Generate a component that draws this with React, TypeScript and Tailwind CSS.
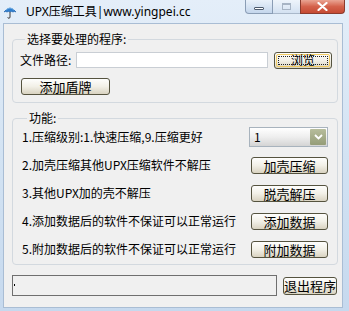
import React from "react";

const FONT = { fontFamily: '"Noto Sans CJK SC", "Noto Sans", sans-serif' };

function XpButton({
  children,
  className = "",
  focused = false,
}: {
  children: React.ReactNode;
  className?: string;
  focused?: boolean;
}) {
  return (
    <div
      className={
        "relative flex items-center justify-center rounded-[3px] border border-[#55533f] bg-gradient-to-b from-[#fefefd] via-[#f2f0e7] to-[#d9d3c1] text-[12px] leading-none text-black " +
        className
      }
    >
      {focused && (
        <div className="absolute inset-[1px] rounded-[2px] border border-[#f2cc62]">
          <div className="absolute inset-[1px] border border-dotted border-[#222]" />
        </div>
      )}
      <span className="relative">{children}</span>
    </div>
  );
}

function Umbrella() {
  return (
    <svg width="14" height="14" viewBox="0 0 14 14">
      <path d="M1 7 Q7 -1 13 7 Q11.5 5.8 10 7 Q8.5 5.8 7 7 Q5.5 5.8 4 7 Q2.5 5.8 1 7Z" fill="#2f7fd0" stroke="#1d5ea8" strokeWidth="0.6" />
      <path d="M3 5 Q7 1 11 5" fill="none" stroke="#8cc4f2" strokeWidth="0.8" />
      <path d="M7 7 V12 Q7 13.3 5.8 13.3 Q4.8 13.3 4.8 12.3" fill="none" stroke="#3a3a3a" strokeWidth="1" />
    </svg>
  );
}

function Row({ text, children }: { text: string; children: React.ReactNode }) {
  return (
    <div className="flex h-[20px] items-center justify-between">
      <span className="text-[12px] leading-none text-black whitespace-nowrap">{text}</span>
      {children}
    </div>
  );
}

export default function App() {
  return (
    <div
      className="flex h-[311px] w-[349px] flex-col overflow-hidden bg-gradient-to-b from-[#e4eef9] via-[#d3e3f3] to-[#c6d9ee]"
      style={FONT}
    >
      {/* Title bar */}
      <div className="flex h-[23px] items-start">
        <div className="flex h-[23px] items-center pl-[3px]">
          <Umbrella />
          <span
            className="ml-[9px] text-[12px] leading-none text-black"
            style={{ fontFamily: '"Noto Sans", "Noto Sans CJK SC", sans-serif' }}
          >
            UPX压缩工具|www.yingpei.cc
          </span>
        </div>
        <div className="ml-auto mr-[4px] flex h-[14px]">
          <div className="flex w-[28px] items-center justify-center rounded-bl-[4px] border border-t-0 border-[#8a9db5] bg-gradient-to-b from-[#e9f1fa] to-[#c4d6ec]">
            <div className="mt-[3px] h-[3px] w-[10px] rounded-[1px] border border-[#4d5b6e] bg-white" />
          </div>
          <div className="flex w-[27px] items-center justify-center border-b border-[#a9b8ca] bg-gradient-to-b from-[#eef4fb] to-[#d3e1f1]">
            <div className="h-[7px] w-[9px] border border-[#a7b4c4] border-t-2" />
          </div>
          <div className="flex w-[45px] items-center justify-center rounded-br-[4px] border border-t-0 border-[#8b3b2d] bg-gradient-to-b from-[#e9a493] via-[#d4624c] to-[#c54a33]">
            <svg width="11" height="9" viewBox="0 0 11 9">
              <path d="M1.5 1 L9.5 8 M9.5 1 L1.5 8" stroke="#fff" strokeWidth="2.2" strokeLinecap="round" />
            </svg>
          </div>
        </div>
      </div>

      {/* Client area */}
      <div className="ml-[3px] mr-[6px] mb-[3px] h-[285px] border border-[#a9bdd4] bg-[#f0f0f0] pl-[8px] pr-[4px] pt-[8px]">
        {/* Group 1 */}
        <fieldset className="rounded-[4px] border border-[#d3d9df] pl-[7px] pr-[5px] pb-[7px]">
          <legend className="ml-[5px] px-[2px] text-[12px] leading-[14px] text-black">选择要处理的程序:</legend>
          <div className="mt-[5px] flex h-[18px] items-center">
            <span className="w-[56px] text-[12px] leading-none text-black whitespace-nowrap">文件路径:</span>
            <div className="h-[16px] w-[192px] border border-[#c9ced4] bg-white" />
            <XpButton focused className="ml-[6px] h-[17px] w-[58px]">
              浏览
            </XpButton>
          </div>
          <XpButton className="ml-[1px] mt-[9px] h-[17px] w-[89px] text-[13px]">添加盾牌</XpButton>
        </fieldset>

        {/* Group 2 */}
        <fieldset className="mt-[8px] rounded-[4px] border border-[#d3d9df] pl-[9px] pr-[9px] pt-[2px] pb-[5px]">
          <legend className="ml-[5px] px-[2px] text-[12px] leading-[14px] text-black">功能:</legend>
          <div className="flex flex-col gap-[8px]">
            <Row text="1.压缩级别:1.快速压缩,9.压缩更好">
              <div className="flex h-[20px] w-[79px] items-center border border-[#a8b3bd] bg-gradient-to-b from-[#ffffff] via-[#eeeeee] to-[#d4d4d4] pl-[4px] pr-[1px]">
                <span className="flex-1 text-[12px] leading-none text-black">1</span>
                <div className="flex h-[16px] w-[16px] items-center justify-center rounded-[1px] bg-gradient-to-b from-[#b7bd9c] to-[#959d78]">
                  <svg width="9" height="6" viewBox="0 0 9 6">
                    <path d="M1 1 L4.5 4.5 L8 1" fill="none" stroke="#fff" strokeWidth="1.8" />
                  </svg>
                </div>
              </div>
            </Row>
            <Row text="2.加壳压缩其他UPX压缩软件不解压">
              <XpButton className="h-[17px] w-[77px] text-[13px]">加壳压缩</XpButton>
            </Row>
            <Row text="3.其他UPX加的壳不解压">
              <XpButton className="h-[17px] w-[77px] text-[13px]">脱壳解压</XpButton>
            </Row>
            <Row text="4.添加数据后的软件不保证可以正常运行">
              <XpButton className="h-[17px] w-[77px] text-[13px]">添加数据</XpButton>
            </Row>
            <Row text="5.附加数据后的软件不保证可以正常运行">
              <XpButton className="h-[17px] w-[77px] text-[13px]">附加数据</XpButton>
            </Row>
          </div>
        </fieldset>

        {/* Status row */}
        <div className="mt-[10px] flex h-[21px] items-center">
          <div className="relative h-[21px] w-[265px] border border-[#6f6f6f] bg-[#f0f0f0]">
            <div className="absolute left-[1px] top-[8px] h-[2px] w-[1px] bg-black" />
          </div>
          <XpButton className="ml-[6px] h-[18px] w-[54px] text-[13px]">退出程序</XpButton>
        </div>
      </div>
    </div>
  );
}
